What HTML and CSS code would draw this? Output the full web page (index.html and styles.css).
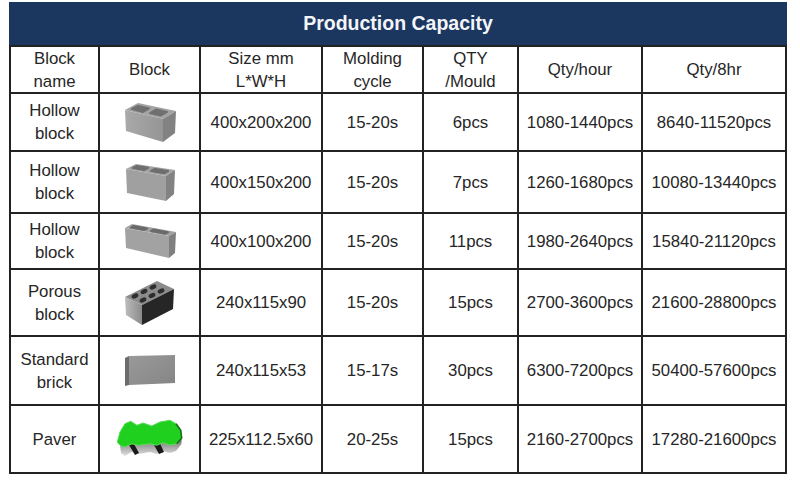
FILE: index.html
```html
<!DOCTYPE html>
<html>
<head>
<meta charset="utf-8">
<link rel="stylesheet" href="styles.css">
</head>
<body>
<div class="sheet">
  <div class="title">Production Capacity</div>

  <div class="cell">Block<br>name</div>
  <div class="cell">Block</div>
  <div class="cell">Size mm<br>L*W*H</div>
  <div class="cell">Molding<br>cycle</div>
  <div class="cell">QTY<br>/Mould</div>
  <div class="cell">Qty/hour</div>
  <div class="cell">Qty/8hr</div>

  <div class="cell">Hollow<br>block</div>
  <div class="cell pic">
    <svg width="54" height="42" viewBox="0 0 54 42">
      <defs>
        <linearGradient id="gf" x1="0" y1="0" x2="1" y2="0"><stop offset="0" stop-color="#a9a9a9"/><stop offset="1" stop-color="#959595"/></linearGradient>
      </defs>
      <path d="M2,9 L15,2 L53,10 L40,18 Z" fill="#a3a3a3"/>
      <path d="M2,9 L40,18 L40,41 L3,30 Z" fill="url(#gf)"/>
      <path d="M40,18 L53,10 L52,32 L40,41 Z" fill="#828282"/>
      <path d="M9,8 L15,5 L26,7.5 L20,11 Z" fill="#707070" stroke="#707070" stroke-width="2" stroke-linejoin="round"/>
      <path d="M27,12 L33,8.5 L44,11 L38,14.5 Z" fill="#707070" stroke="#707070" stroke-width="2" stroke-linejoin="round"/>
    </svg>
  </div>
  <div class="cell">400x200x200</div>
  <div class="cell">15-20s</div>
  <div class="cell">6pcs</div>
  <div class="cell">1080-1440pcs</div>
  <div class="cell">8640-11520pcs</div>

  <div class="cell">Hollow<br>block</div>
  <div class="cell pic">
    <svg width="52" height="40" viewBox="0 0 52 40">
      <path d="M2,7 L12,2 L51,8 L42,14 Z" fill="#a3a3a3"/>
      <path d="M2,7 L42,14 L42,39 L3,31 Z" fill="#a0a0a0"/>
      <path d="M42,14 L51,8 L50,32 L42,39 Z" fill="#828282"/>
      <path d="M9,6 L13,4 L24,5.8 L20,8 Z" fill="#6e6e6e" stroke="#6e6e6e" stroke-width="2.2" stroke-linejoin="round"/>
      <path d="M27,9 L31,7 L44,9 L40,11.2 Z" fill="#6e6e6e" stroke="#6e6e6e" stroke-width="2.2" stroke-linejoin="round"/>
    </svg>
  </div>
  <div class="cell">400x150x200</div>
  <div class="cell">15-20s</div>
  <div class="cell">7pcs</div>
  <div class="cell">1260-1680pcs</div>
  <div class="cell">10080-13440pcs</div>

  <div class="cell">Hollow<br>block</div>
  <div class="cell pic">
    <svg width="54" height="36" viewBox="0 0 54 36">
      <path d="M2,5 L9,1 L53,9 L46,13 Z" fill="#a0a0a0"/>
      <path d="M2,5 L46,13 L46,35 L3,25 Z" fill="#a2a2a2"/>
      <path d="M46,13 L53,9 L52,30 L46,35 Z" fill="#808080"/>
      <path d="M8,4.5 L10.5,3 L24,5.5 L21.5,7 Z" fill="#6a6a6a" stroke="#6a6a6a" stroke-width="2" stroke-linejoin="round"/>
      <path d="M28,8 L30.5,6.5 L45,9.2 L42.5,10.7 Z" fill="#6a6a6a" stroke="#6a6a6a" stroke-width="2" stroke-linejoin="round"/>
    </svg>
  </div>
  <div class="cell">400x100x200</div>
  <div class="cell">15-20s</div>
  <div class="cell">11pcs</div>
  <div class="cell">1980-2640pcs</div>
  <div class="cell">15840-21120pcs</div>

  <div class="cell">Porous<br>block</div>
  <div class="cell pic">
    <svg width="50" height="47" viewBox="0 0 50 47">
      <defs>
        <linearGradient id="gp" x1="0" y1="0" x2="1" y2="0"><stop offset="0" stop-color="#bdbdbd"/><stop offset="1" stop-color="#8a8a8a"/></linearGradient>
      </defs>
      <path d="M0,18 L32,2 L49,10 L17,26 Z" fill="#8c8c8c"/>
      <path d="M0,18 L17,26 L17,46 L1,36 Z" fill="url(#gp)"/>
      <path d="M17,26 L49,10 L48,30 L17,46 Z" fill="#262626"/>
      <g fill="#2e2e2e">
        <ellipse cx="10" cy="17" rx="3.6" ry="2.2" transform="rotate(-26 10 17)"/>
        <ellipse cx="19" cy="12.5" rx="3.6" ry="2.2" transform="rotate(-26 19 12.5)"/>
        <ellipse cx="28" cy="8" rx="3.6" ry="2.2" transform="rotate(-26 28 8)"/>
        <ellipse cx="18" cy="21" rx="3.6" ry="2.2" transform="rotate(-26 18 21)"/>
        <ellipse cx="27" cy="16.5" rx="3.6" ry="2.2" transform="rotate(-26 27 16.5)"/>
        <ellipse cx="36" cy="12" rx="3.6" ry="2.2" transform="rotate(-26 36 12)"/>
      </g>
    </svg>
  </div>
  <div class="cell">240x115x90</div>
  <div class="cell">15-20s</div>
  <div class="cell">15pcs</div>
  <div class="cell">2700-3600pcs</div>
  <div class="cell">21600-28800pcs</div>

  <div class="cell">Standard<br>brick</div>
  <div class="cell pic">
    <svg width="52" height="32" viewBox="0 0 52 32">
      <defs>
        <linearGradient id="gb" x1="0" y1="0" x2="1" y2="1"><stop offset="0" stop-color="#9a9a9a"/><stop offset="1" stop-color="#858585"/></linearGradient>
      </defs>
      <path d="M5,1 L51,0 L51,28 L5,30 Z" fill="url(#gb)"/>
      <path d="M1,3 L5,1 L5,30 L1,31 Z" fill="#6c6c6c"/>
    </svg>
  </div>
  <div class="cell">240x115x53</div>
  <div class="cell">15-17s</div>
  <div class="cell">30pcs</div>
  <div class="cell">6300-7200pcs</div>
  <div class="cell">50400-57600pcs</div>

  <div class="cell">Paver</div>
  <div class="cell pic">
    <svg width="66" height="38" viewBox="0 0 66 38">
      <defs>
        <linearGradient id="gs" x1="0" y1="0" x2="0" y2="1"><stop offset="0" stop-color="#6a6a6a"/><stop offset="1" stop-color="#e2e2e2"/></linearGradient>
      </defs>
      <path d="M3,25 L8,27 L14.7,23.7 L21.3,25.3 L33,23.7 L39.7,25.3 L46,22.7 L53,25 L59.7,23.7 L64.7,18 L64.5,24 L59,31 L53,33 L46,31 L39.7,34 L33,32 L21.3,34 L14.7,32 L8,36 L4,33 Z" fill="url(#gs)"/>
      <path d="M12,25 L17,24 L22,33 L18,35 Z" fill="#1a1a1a"/>
      <path d="M37,25 L43,23.5 L47,32 L42,34 Z" fill="#1a1a1a"/>
      <path d="M0.3,22 L3,12 L8,3.7 L13.7,1.3 L20,5.3 L26,3 L34.7,6 L43,2 L53,0.3 L59,3.7 L63.7,10.3 L64.7,18 L59.7,23.7 L53,25 L46,22.7 L39.7,25.3 L33,23.7 L21.3,25.3 L14.7,23.7 L8,27 L3,25.3 Z" fill="#1fd01f" stroke="#52dc52" stroke-width="1" stroke-linejoin="round"/>
      <path d="M59,3.7 L63.7,10.3 L64.7,18 L59.7,23.7" fill="none" stroke="#166e16" stroke-width="1.6" stroke-linejoin="round"/>
    </svg>
  </div>
  <div class="cell">225x112.5x60</div>
  <div class="cell">20-25s</div>
  <div class="cell">15pcs</div>
  <div class="cell">2160-2700pcs</div>
  <div class="cell">17280-21600pcs</div>
</div>
</body>
</html>
```

FILE: styles.css
```css
html, body {
  margin: 0;
  padding: 0;
  background: #ffffff;
}

body {
  font-family: "Liberation Sans", Arial, sans-serif;
}

.sheet {
  margin: 2px 0 0 9px;
  width: 778px;
  box-sizing: border-box;
  background: #222222;
  padding: 0 2px 2px 2px;
  display: grid;
  grid-template-columns: 87px 99px 120px 99px 93px 122px 142px;
  grid-template-rows: 43px 45px 56px 60px 54px 65px 67px 66px;
  column-gap: 2px;
  row-gap: 2px;
}

.title {
  grid-column: 1 / -1;
  margin: 0 -2px;
  background: #1b365f;
  color: #f3f5f9;
  font-weight: bold;
  font-size: 19.5px;
  display: flex;
  align-items: center;
  justify-content: center;
}

.cell {
  background: #ffffff;
  color: #262626;
  font-size: 16.8px;
  line-height: 23px;
  text-align: center;
  display: flex;
  align-items: center;
  justify-content: center;
  white-space: nowrap;
}

.pic svg {
  display: block;
}
```
